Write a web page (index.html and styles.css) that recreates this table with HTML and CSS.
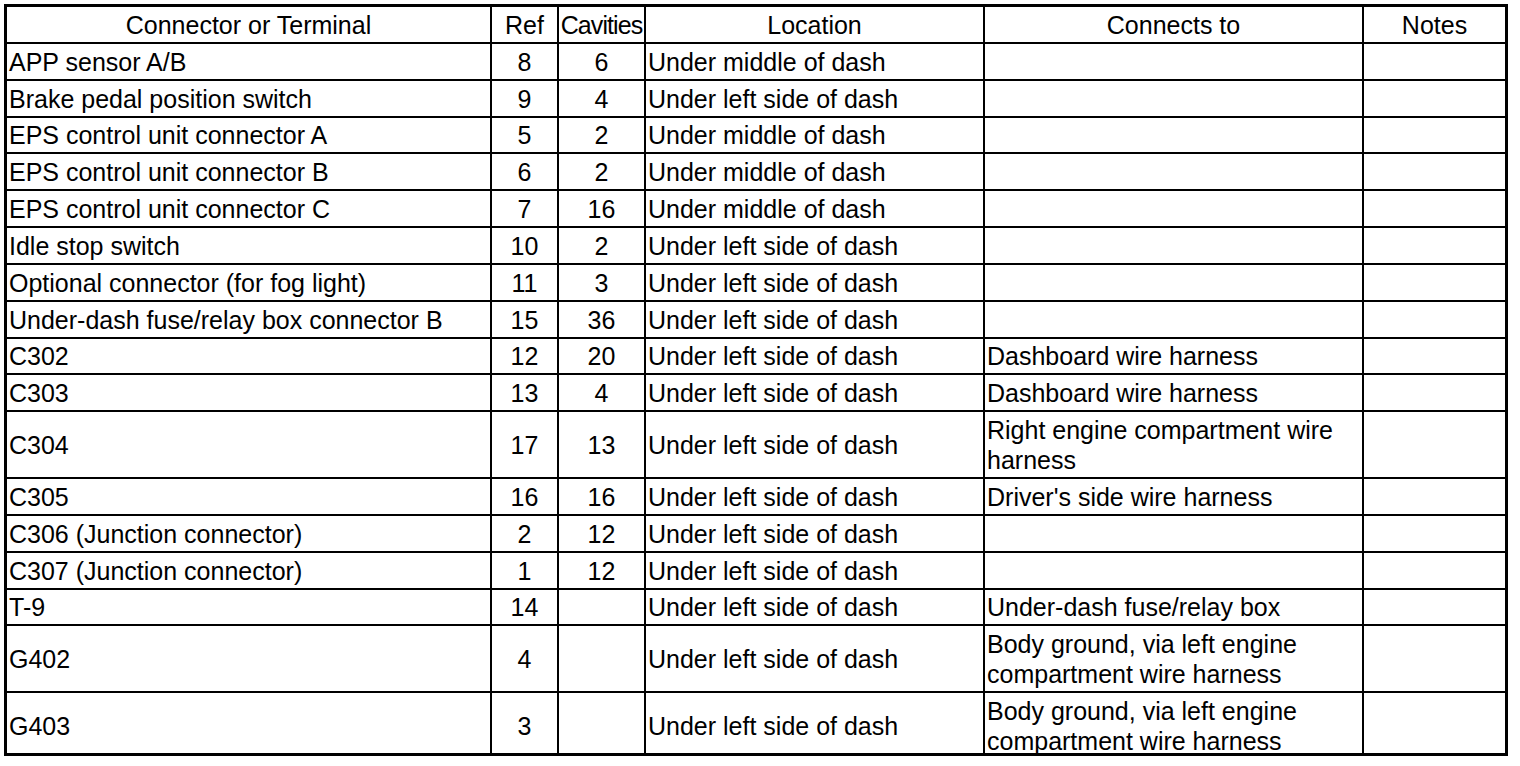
FILE: index.html
```html
<!DOCTYPE html>
<html lang="en">
<head>
<meta charset="utf-8">
<title>Connector locations</title>
<link rel="stylesheet" href="styles.css">
</head>
<body>
<div class="sheet">
  <div class="cell head">Connector or Terminal</div>
  <div class="cell head">Ref</div>
  <div class="cell head cav">Cavities</div>
  <div class="cell head">Location</div>
  <div class="cell head">Connects to</div>
  <div class="cell head last">Notes</div>

  <div class="cell">APP sensor A/B</div><div class="cell num">8</div><div class="cell num">6</div><div class="cell">Under middle of dash</div><div class="cell"></div><div class="cell last"></div>
  <div class="cell">Brake pedal position switch</div><div class="cell num">9</div><div class="cell num">4</div><div class="cell">Under left side of dash</div><div class="cell"></div><div class="cell last"></div>
  <div class="cell">EPS control unit connector A</div><div class="cell num">5</div><div class="cell num">2</div><div class="cell">Under middle of dash</div><div class="cell"></div><div class="cell last"></div>
  <div class="cell">EPS control unit connector B</div><div class="cell num">6</div><div class="cell num">2</div><div class="cell">Under middle of dash</div><div class="cell"></div><div class="cell last"></div>
  <div class="cell">EPS control unit connector C</div><div class="cell num">7</div><div class="cell num">16</div><div class="cell">Under middle of dash</div><div class="cell"></div><div class="cell last"></div>
  <div class="cell">Idle stop switch</div><div class="cell num">10</div><div class="cell num">2</div><div class="cell">Under left side of dash</div><div class="cell"></div><div class="cell last"></div>
  <div class="cell">Optional connector (for fog light)</div><div class="cell num">11</div><div class="cell num">3</div><div class="cell">Under left side of dash</div><div class="cell"></div><div class="cell last"></div>
  <div class="cell">Under-dash fuse/relay box connector B</div><div class="cell num">15</div><div class="cell num">36</div><div class="cell">Under left side of dash</div><div class="cell"></div><div class="cell last"></div>
  <div class="cell">C302</div><div class="cell num">12</div><div class="cell num">20</div><div class="cell">Under left side of dash</div><div class="cell">Dashboard wire harness</div><div class="cell last"></div>
  <div class="cell">C303</div><div class="cell num">13</div><div class="cell num">4</div><div class="cell">Under left side of dash</div><div class="cell">Dashboard wire harness</div><div class="cell last"></div>
  <div class="cell">C304</div><div class="cell num">17</div><div class="cell num">13</div><div class="cell">Under left side of dash</div><div class="cell">Right engine compartment wire harness</div><div class="cell last"></div>
  <div class="cell">C305</div><div class="cell num">16</div><div class="cell num">16</div><div class="cell">Under left side of dash</div><div class="cell">Driver's side wire harness</div><div class="cell last"></div>
  <div class="cell">C306 (Junction connector)</div><div class="cell num">2</div><div class="cell num">12</div><div class="cell">Under left side of dash</div><div class="cell"></div><div class="cell last"></div>
  <div class="cell">C307 (Junction connector)</div><div class="cell num">1</div><div class="cell num">12</div><div class="cell">Under left side of dash</div><div class="cell"></div><div class="cell last"></div>
  <div class="cell">T-9</div><div class="cell num">14</div><div class="cell num"></div><div class="cell">Under left side of dash</div><div class="cell">Under-dash fuse/relay box</div><div class="cell last"></div>
  <div class="cell">G402</div><div class="cell num">4</div><div class="cell num"></div><div class="cell">Under left side of dash</div><div class="cell">Body ground, via left engine compartment wire harness</div><div class="cell last"></div>
  <div class="cell bottom">G403</div><div class="cell num bottom">3</div><div class="cell num bottom"></div><div class="cell bottom">Under left side of dash</div><div class="cell bottom">Body ground, via left engine compartment wire harness</div><div class="cell last bottom"></div>
</div>
</body>
</html>
```

FILE: styles.css
```css
html, body {
  margin: 0;
  padding: 0;
  background: #ffffff;
}

body {
  font-family: "Liberation Sans", Arial, sans-serif;
  font-size: 25px;
  color: #000000;
}

.sheet {
  box-sizing: border-box;
  margin: 4px 0 0 4px;
  width: 1504px;
  border: 3px solid #000000;
  display: grid;
  grid-template-columns: 485px 67px 87px 339px 379px 141px;
  grid-template-rows: 37px 37px 37px 36px 37px 37px 37px 37px 37px 36px 37px 67px 37px 37px 37px 36px 67px 60px;
}

.cell {
  box-sizing: border-box;
  border-right: 2px solid #000000;
  border-bottom: 2px solid #000000;
  padding: 0 2px;
  display: flex;
  align-items: center;
  line-height: 30px;
  white-space: normal;
  min-width: 0;
}

.cell.head {
  justify-content: center;
  padding: 0;
}

.cell.cav {
  letter-spacing: -0.9px;
  overflow: visible;
}

.cell.num {
  justify-content: center;
  padding: 0;
}

.cell.last {
  border-right: none;
}

.cell.bottom {
  border-bottom: none;
  padding-top: 5px;
}
```
